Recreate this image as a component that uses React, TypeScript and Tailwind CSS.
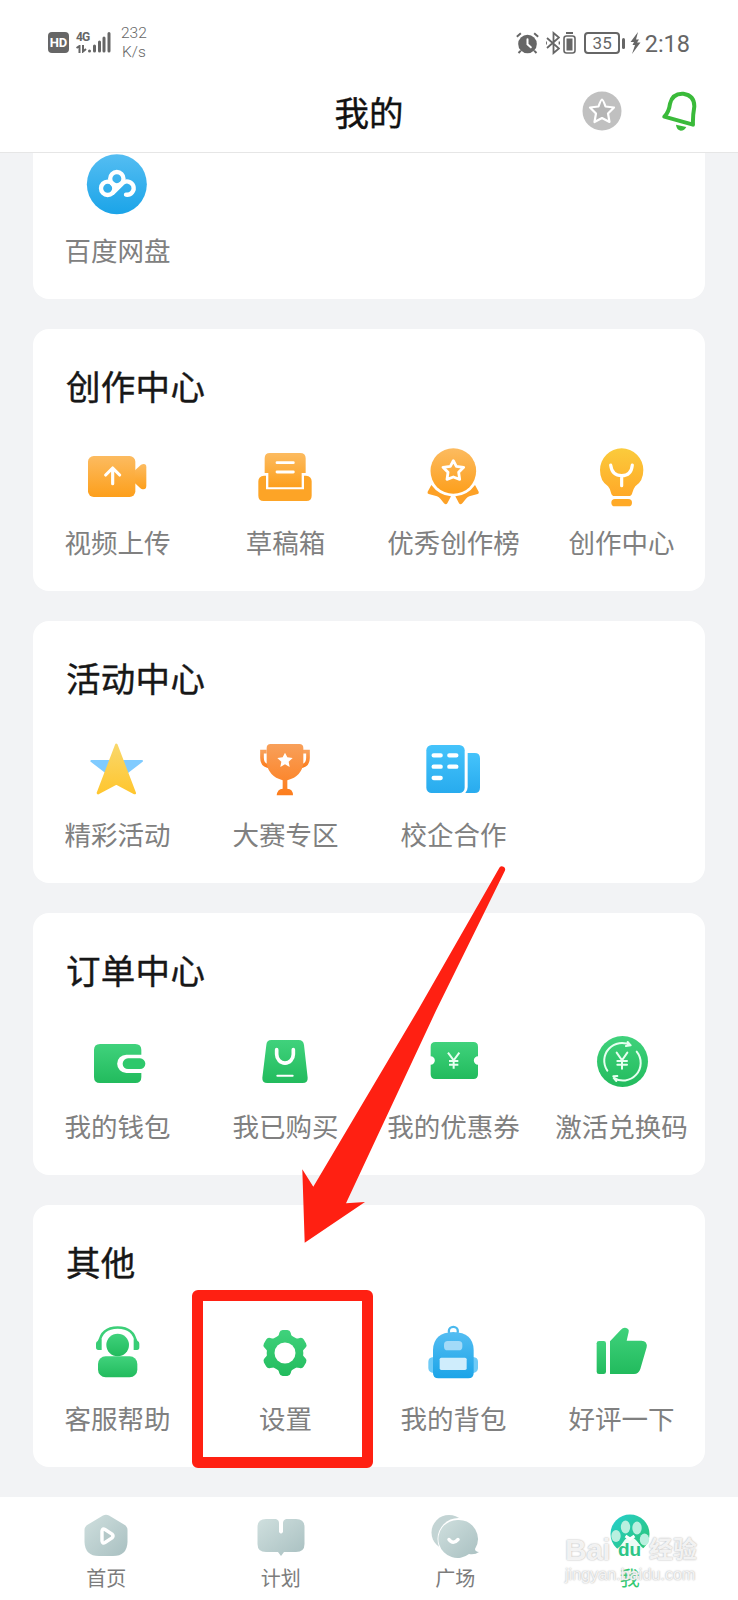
import type { ReactNode } from "react";

type Item = { label: string; box: string; art: ReactNode };

const Gradient = ({ id, from, to }: { id: string; from: string; to: string }) => (
  <linearGradient id={id} x1="0" y1="0" x2="0" y2="1">
    <stop offset="0" stopColor={from} />
    <stop offset="1" stopColor={to} />
  </linearGradient>
);

const Defs = () => (
  <svg className="absolute size-0" aria-hidden="true">
    <defs>
      <Gradient id="sky" from="#54bdf2" to="#1ba4e8" />
      <Gradient id="orange" from="#fcbb60" to="#fd9f1b" />
      <Gradient id="bulb" from="#fbcb3c" to="#ffa928" />
      <Gradient id="gold" from="#f9d76a" to="#ffc62f" />
      <Gradient id="trophy" from="#f8a05a" to="#fd7d1c" />
      <Gradient id="blue" from="#45c3fb" to="#28abee" />
      <Gradient id="green" from="#40d27c" to="#22bb5d" />
      <linearGradient id="mist" x1="0" y1="0" x2="1" y2="1">
        <stop offset="0" stopColor="#cfdfde" />
        <stop offset="1" stopColor="#a9c0c1" />
      </linearGradient>
      <linearGradient id="teal" x1="0" y1="0" x2="1" y2="1">
        <stop offset="0" stopColor="#26cfd0" />
        <stop offset="1" stopColor="#2bc46c" />
      </linearGradient>
    </defs>
  </svg>
);

const netdisk: Item[] = [
  {
    label: "百度网盘",
    box: "183 -3 216 216",
    art: (
      <>
        <circle cx="290.500" cy="103" r="90" fill="url(#sky)" />
        <g fill="none" stroke="#fff" strokeWidth="13" strokeLinecap="round">
          <circle cx="290.500" cy="86" r="20" />
          <circle cx="263" cy="115" r="20" />
          <path d="M278 129 L306 101 A20 20 0 1 1 318 134" />
        </g>
      </>
    ),
  },
];

const create: Item[] = [
  {
    label: "视频上传",
    box: "153 33 216 216",
    art: (
      <>
        <rect x="174" y="78" width="142" height="123" rx="17" fill="url(#orange)" />
        <path d="M315 121L333 104Q349 98 349 112V168Q348 182 333 176L315 160Z" fill="url(#orange)" />
        <path d="M248 161V117M227 135L248 114L269 135" fill="none" stroke="#fff" strokeWidth="9.500" strokeLinecap="round" strokeLinejoin="round" />
      </>
    ),
  },
  {
    label: "草稿箱",
    box: "657 33 216 216",
    art: (
      <>
        <path d="M704 129V85Q704 69 720 69H810Q827 69 827 85V129H815V172H715V129Z" fill="url(#orange)" />
        <path d="M702 137H708V178H822V137H828Q845 139 845 154V197Q845 213 829 213H701Q685 213 685 197V154Q685 139 702 137Z" fill="#fda426" />
        <path d="M741 98H790M741 126H790" stroke="#fff" strokeWidth="8.500" strokeLinecap="round" />
      </>
    ),
  },
  {
    label: "优秀创作榜",
    box: "147 33 216 216",
    art: (
      <>
        <path d="M190 165Q213 196 249 199L238 220Q234 226 228 220L217 206Q213 202 207 199L182 192Q177 190 179 185Z" fill="#fda126" />
        <path d="M321 165Q299 196 262 199L273 220Q277 226 283 220L294 206Q298 202 304 199L329 192Q334 190 332 185Z" fill="#fda126" />
        <circle cx="256" cy="123" r="68.500" fill="url(#orange)" />
        <path d="M256 92L265 109L287 112L272 127L275 148L256 141L237 148L240 127L225 112L247 109Z" fill="none" stroke="#fff" strokeWidth="8.500" strokeLinejoin="round" />
      </>
    ),
  },
  {
    label: "创作中心",
    box: "651 33 216 216",
    art: (
      <>
        <path d="M761 55A65 65 0 0 0 696 120Q696 153 720 169Q727 177 729 188Q731 198 740 198H782Q791 198 793 188Q796 177 802 169Q826 153 826 120A65 65 0 0 0 761 55Z" fill="url(#bulb)" />
        <rect x="730" y="207" width="62" height="22" rx="11" fill="#ffaa27" />
        <path d="M728 105Q732 137 761 137Q790 137 793 105M761 138V167" fill="none" stroke="#fff" strokeWidth="9.500" strokeLinecap="round" />
      </>
    ),
  },
];

const activity: Item[] = [
  {
    label: "精彩活动",
    box: "153 219 216 216",
    art: (
      <>
        <path d="M184 303H336L260 361Z" fill="#80cbff" stroke="#80cbff" strokeWidth="6" strokeLinejoin="round" />
        <path d="M259 255L314 399L259 370L204 399Z" fill="url(#gold)" stroke="url(#gold)" strokeWidth="8" strokeLinejoin="round" />
      </>
    ),
  },
  {
    label: "大赛专区",
    box: "657 219 216 216",
    art: (
      <>
        <path d="M710 275H696V293Q696 318 722 320M819 275H834V293Q834 318 808 320" fill="none" stroke="url(#trophy)" strokeWidth="11" />
        <path d="M710 264Q710 252 722 252H808Q820 252 820 264V307Q817 349 772 361V386Q789 387 789 406H740Q742 387 758 386V361Q714 349 710 307Z" fill="url(#trophy)" />
        <path d="M765 278L772 292L788 294L776 305L779 321L765 313L751 321L754 305L742 294L758 292Z" fill="#fff" />
      </>
    ),
  },
  {
    label: "校企合作",
    box: "147 39 216 216",
    art: (
      <>
        <rect x="175" y="75" width="115" height="144" rx="16" fill="url(#blue)" />
        <path d="M299 99H320Q336 99 336 115V203Q336 219 320 219H292Q299 211 299 201Z" fill="url(#blue)" />
        <path d="M197 106H218M244 106H265M197 140H218M244 140H265M197 174H218" stroke="#fff" strokeWidth="13" strokeLinecap="round" />
      </>
    ),
  },
];

const orders: Item[] = [
  {
    label: "我的钱包",
    box: "153 255 216 216",
    art: (
      <>
        <path d="M192 330Q192 312 210 312H316Q334 312 334 330V344H289A27.500 27.500 0 0 0 289 399H334V411Q334 429 316 429H210Q192 429 192 411Z" fill="url(#green)" />
        <rect x="278" y="355" width="68" height="32" rx="16" fill="#2ec86b" />
      </>
    ),
  },
  {
    label: "我已购买",
    box: "657 255 216 216",
    art: (
      <>
        <path d="M709 315Q710 300 724 300H806Q820 300 822 315L833 413Q834 429 818 429H712Q696 429 697 413Z" fill="url(#green)" />
        <path d="M740 329V343A24.500 26 0 0 0 790 343V329" fill="none" stroke="#fff" strokeWidth="11" strokeLinecap="round" />
        <path d="M742 407H788" stroke="#fff" strokeWidth="6" strokeLinecap="round" />
      </>
    ),
  },
  {
    label: "我的优惠券",
    box: "147 45 216 216",
    art: (
      <>
        <path d="M188 110Q188 96 202 96H316Q330 96 330 110V139A12.500 12.500 0 0 0 330 164V193Q330 207 316 207H202Q188 207 188 193V164A12.500 12.500 0 0 0 188 139Z" fill="url(#green)" />
        <path d="M240 128L257 151L274 128M257 151V176M243 153H271M243 164H271" fill="none" stroke="#e6fff0" strokeWidth="6" />
      </>
    ),
  },
  {
    label: "激活兑换码",
    box: "651 45 216 216",
    art: (
      <>
        <circle cx="763.500" cy="154.500" r="76.500" fill="url(#green)" />
        <g fill="none" stroke="#e6fff0" strokeWidth="6" strokeLinecap="round">
          <path d="M718 182A53 53 0 0 1 788 106L779 96M788 106L774 108M806 125A53 53 0 0 1 736 203L745 213M736 199L748 198" />
          <path d="M746 128L762 151L778 128M762 151V176M748 153H777M748 164H777" />
        </g>
      </>
    ),
  },
];

const tooth = "M736 388L744 379Q747 374 748 368Q750 360 758 360H772Q780 360 782 368Q783 374 786 379L794 388Z";

const others: Item[] = [
  {
    label: "客服帮助",
    box: "153 321 216 216",
    art: (
      <>
        <path d="M208 398Q214 353 263 352.500Q312 353 318 398" fill="none" stroke="#3ccf78" strokeWidth="8" />
        <path d="M207 388H215V420H205Q198 420 198 412V401Q198 395 203 393ZM319 388H311V420H321Q328 420 328 412V401Q328 395 323 393Z" fill="#38cd75" />
        <circle cx="263" cy="405" r="34" fill="url(#green)" />
        <rect x="204" y="439" width="118" height="63" rx="23" fill="url(#green)" />
      </>
    ),
  },
  {
    label: "设置",
    box: "657 321 216 216",
    art: (
      <>
        <mask id="gearHole">
          <rect x="657" y="321" width="216" height="216" fill="#fff" />
          <circle cx="765" cy="429" r="31.500" fill="#000" />
        </mask>
        <mask id="gearShape">
          <g fill="#fff">
            <circle cx="765" cy="429" r="55" />
            {[0, 60, 120, 180, 240, 300].map((a) => (
              <path key={a} d={tooth} transform={`rotate(${a} 765 429)`} />
            ))}
          </g>
        </mask>
        <g mask="url(#gearHole)">
          <rect x="695" y="359" width="140" height="140" fill="url(#green)" mask="url(#gearShape)" />
        </g>
      </>
    ),
  },
  {
    label: "我的背包",
    box: "147 81 216 216",
    art: (
      <>
        <path d="M197 201Q181 202 181 215V235Q182 248 197 249ZM315 201Q330 202 330 215V235Q329 248 315 249Z" fill="#6fcbf7" />
        <circle cx="256" cy="124" r="13.500" fill="none" stroke="#4bb9ee" strokeWidth="7" />
        <path d="M195 180Q196 128 256 126Q316 128 317 180V249Q317 265 301 265H211Q195 265 195 249Z" fill="url(#sky)" />
        <rect x="228" y="153" width="55" height="28" rx="11" fill="#a2daf8" />
        <rect x="215" y="203" width="81" height="37" rx="5" fill="#cfedfc" />
      </>
    ),
  },
  {
    label: "好评一下",
    box: "651 81 216 216",
    art: (
      <>
        <rect x="686" y="153" width="28" height="99" rx="7" fill="url(#green)" />
        <path d="M726 154L758 120Q768 109 779 116Q784 119 782 126L776 152H820Q839 153 836 172L817 237Q812 252 798 252H726Z" fill="url(#green)" />
      </>
    ),
  },
];

const IconRow = ({ items }: { items: Item[] }) => (
  <div className="grid grid-cols-4">
    {items.map((item) => (
      <div key={item.label} className="flex flex-col items-center">
        <svg viewBox={item.box} className="size-[72px]">
          {item.art}
        </svg>
        <span className="mt-[11px] pl-px text-[26.500px] leading-9 whitespace-nowrap text-[#808080]">{item.label}</span>
      </div>
    ))}
  </div>
);

const Card = ({ title, items }: { title: string; items: Item[] }) => (
  <section className="h-[262px] shrink-0 rounded-2xl bg-white pt-[34px]">
    <h2 className="mb-[34px] pl-[33px] text-[34.500px] leading-[44px] tracking-[0.3px] text-[#171717] [-webkit-text-stroke:0.4px_#171717]">{title}</h2>
    <IconRow items={items} />
  </section>
);

const StatusBar = () => (
  <div className="flex h-[76px] items-start pt-[25px] pr-[48px] pl-[48px] text-[#666]">
    <span className="mt-[7px] flex size-[21px] items-center justify-center rounded-[4px] bg-[#666] font-['Roboto'] text-[13px] font-bold text-white">HD</span>
    <div className="ml-[7px] flex h-7 items-end">
      <div className="flex w-[12px] flex-col">
        <span className="font-['Roboto'] text-[12px] leading-[11px] font-bold tracking-[-1px]">4G</span>
        <svg viewBox="0 0 12 8" className="mt-[2px] h-2 w-3" fill="none" stroke="#666" strokeWidth="2">
          <path d="M0.500 3L3.500 1V8M7 0V6.500L10 4" />
        </svg>
      </div>
      <svg viewBox="0 0 23 22" className="h-[22px] w-[23px]" stroke="#666" strokeWidth="3" strokeLinecap="round">
        <path d="M1.500 20V20M6.500 20V15M11.500 20V11M16 20V7M21 20V2.500" />
      </svg>
    </div>
    <div className="-mt-px ml-[10px] flex flex-col items-center font-['Roboto'] text-[15.500px] leading-[18.500px] font-light text-[#666]">
      <span>232</span>
      <span>K/s</span>
    </div>
    <div className="mt-[5px] ml-auto flex items-center">
      <svg viewBox="0 0 68 66" className="mr-[7px] h-[22px] w-[23px]">
        <circle cx="34" cy="36" r="28" fill="#666" />
        <path d="M2 14L14 4M54 4L66 14M14 56L7 63M54 56L61 63" stroke="#666" strokeWidth="6" />
        <path d="M34 22V37L44 46" fill="none" stroke="#fff" strokeWidth="6" strokeLinecap="round" />
      </svg>
      <svg viewBox="0 0 14 24" className="mr-[3px] h-6 w-[14px]" fill="none" stroke="#666" strokeWidth="1.800">
        <path d="M1 7L13 17.500L7.500 22V2L13 6.500L1 17M0 10.500V13.500M13.500 10.500V13.500" />
      </svg>
      <svg viewBox="0 0 13 22" className="mr-[8px] h-[22px] w-[13px]">
        <path d="M3 1H10" stroke="#666" strokeWidth="2" />
        <rect x="1" y="4" width="11" height="17" rx="2.500" fill="none" stroke="#666" strokeWidth="1.600" />
        <rect x="3.500" y="6.500" width="6" height="12" fill="#666" />
      </svg>
      <span className="flex h-[22px] w-9 items-center justify-center rounded-[4px] border-2 border-[#666] pt-px font-['Roboto'] text-[17px] leading-none">35</span>
      <span className="ml-[2px] h-[11px] w-[2.500px] rounded-sm bg-[#666]" />
      <svg viewBox="0 0 11 24" className="ml-[5px] h-6 w-[11px]" fill="#666">
        <path d="M8 1L0.500 11H4L2.500 14H5L2 23L10.500 11.500H7L9 8.500H6Z" />
      </svg>
      <span className="mt-[2px] ml-[4px] font-['Roboto'] text-[23.500px] leading-6">2:18</span>
    </div>
  </div>
);

const Header = () => (
  <header className="h-[153px] shrink-0 border-b border-[#e6e6e6] bg-white">
    <StatusBar />
    <div className="grid h-[70px] grid-cols-3 items-center">
      <span />
      <h1 className="pb-px text-center text-[34.500px] leading-[44px] text-[#111] [-webkit-text-stroke:0.4px_#111]">我的</h1>
      <div className="flex items-center justify-end pr-[41px]">
        <svg viewBox="0 0 40 40" className="mr-[40px] size-10">
          <circle cx="20" cy="20" r="19.500" fill="#c0c0c0" />
          <path d="M20 8.500Q21 8.500 23.500 15.500L32 16.500L26 22.500L27.500 31L20 27L12.500 31L14 22.500L8 16.500L16.500 15.500Q19 8.500 20 8.500Z" fill="#b5b5b5" stroke="#fff" strokeWidth="2.200" strokeLinejoin="round" />
        </svg>
        <svg viewBox="882 274 106 122" className="h-[40.700px] w-[35.300px]" fill="none" stroke="#3aba3a">
          <path d="M889 351Q903 337 906 312Q914 280 946 282Q980 287 979 321Q974 350 975 375Z" strokeWidth="12" strokeLinejoin="round" />
          <path d="M924 375L955 382Q950 393 938 393Q926 391 924 375Z" fill="#3aba3a" stroke="none" />
        </svg>
      </div>
    </div>
  </header>
);

const tabs: { label: string; art: ReactNode }[] = [
  {
    label: "首页",
    art: (
      <>
        <path d="M21 4.500Q24 3 27 4.500L42 13.500Q45.500 15.500 45.500 19V31Q45 45 31 45H17Q3 45 2.500 31V19Q2.500 15.500 6 13.500Z" fill="url(#mist)" />
        <path d="M20 20V30Q20.500 33 23 31.500L30 27Q32 25 30 23L23 18.500Q20.500 17 20 20Z" fill="#b5c9c9" stroke="#fff" strokeWidth="3.400" />
      </>
    ),
  },
  {
    label: "计划",
    art: (
      <path d="M9 8H19Q22 9 22 12V21Q24 24 26 21V12Q26 9 29 8H39Q47.500 8 47.500 16V33Q47.500 41 39 41H27L24 45L21 41H9Q0.500 41 0.500 33V16Q0.500 8 9 8Z" fill="url(#mist)" />
    ),
  },
  {
    label: "广场",
    art: (
      <>
        <circle cx="18" cy="21.500" r="17.500" fill="#c3d4d4" />
        <circle cx="27.500" cy="28" r="21" fill="#fff" />
        <path d="M27.500 9A19 19 0 1 0 38 43Q44 44 48 41Q44 40.500 44 38A19 19 0 0 0 27.500 9Z" fill="url(#mist)" />
        <path d="M18 28.500Q22 34 27 28.500" fill="none" stroke="#fff" strokeWidth="3.500" strokeLinecap="round" />
      </>
    ),
  },
  {
    label: "我",
    art: (
      <>
        <circle cx="24" cy="23" r="19.500" fill="url(#teal)" />
        <g fill="#b9f0df">
          <ellipse cx="19.500" cy="16" rx="4.700" ry="6.500" />
          <ellipse cx="31" cy="17" rx="4.700" ry="6.500" />
          <ellipse cx="10" cy="25" rx="4.700" ry="6" />
          <ellipse cx="38.500" cy="28.500" rx="4.700" ry="6" />
        </g>
        <path d="M24 26C18 26 17 34 12 37C6 42 10 50 17 49C22 48 27 48 32 49C39 50 42 42 37 37C32 33 30 26 24 26Z" fill="#fff" opacity="0.92" />
        <path d="M19.500 25L24 28L28.500 25" fill="none" stroke="#fff" strokeWidth="3" />
      </>
    ),
  },
];

const TabBar = () => (
  <nav className="mt-[30px] flex h-[103px] shrink-0 bg-white pr-[21px] pl-[19px]">
    {tabs.map((tab, i) => (
      <div key={tab.label} className="flex flex-1 flex-col items-center pt-[14px]">
        <svg viewBox="0 0 48 50" className="h-[50px] w-12">
          {tab.art}
        </svg>
        <span className={i === 3 ? "mt-[5px] text-[20px] leading-6 text-[#30c971]" : "mt-[5px] text-[20px] leading-6 text-[#7c7c7c]"}>{tab.label}</span>
      </div>
    ))}
  </nav>
);

const Watermark = () => (
  <div className="absolute top-[1535px] left-[565px] w-[134px] font-['Liberation_Sans','Noto_Sans_CJK_SC',sans-serif] text-white/80 [text-shadow:0_0_2px_#bbb,0_0_1px_#ccc]">
    <div className="flex h-[30px] items-center leading-[30px]">
      <span className="w-[53px] text-[30px] font-bold tracking-[-0.5px]">Bai</span>
      <span className="w-[31px] text-[19px] leading-5 font-bold text-[#2dc587] [text-shadow:none]">du</span>
      <span className="text-[24px] font-bold">经验</span>
    </div>
    <div className="text-[16.200px] leading-[18px] whitespace-nowrap">jingyan.baidu.com</div>
  </div>
);

export default function App() {
  return (
    <div className="relative flex h-[1600px] w-[738px] flex-col overflow-hidden bg-[#f2f3f5] font-['Noto_Sans_CJK_SC',sans-serif]">
      <Defs />
      <Header />
      <main className="flex flex-col gap-[30px] px-[33px]">
        <section className="h-[146px] shrink-0 rounded-b-2xl bg-white">
          <div className="-mt-1">
            <IconRow items={netdisk} />
          </div>
        </section>
        <Card title="创作中心" items={create} />
        <Card title="活动中心" items={activity} />
        <Card title="订单中心" items={orders} />
        <Card title="其他" items={others} />
      </main>
      <TabBar />
      <svg viewBox="0 0 738 1600" className="pointer-events-none absolute inset-0 h-[1600px] w-[738px]" fill="#ff2012">
        <path d="M499.500 867.500A3.200 3.200 0 0 1 505 870.500L436.300 1010L346 1203.300L365 1202L304.700 1242.700L302.300 1169.300L313.300 1186.700L418 1010Z" />
      </svg>
      <div className="pointer-events-none absolute top-[1290px] left-[192px] h-[178px] w-[181px] rounded-[6px] border-[11.500px] border-[#ff2012]" />
      <Watermark />
    </div>
  );
}
